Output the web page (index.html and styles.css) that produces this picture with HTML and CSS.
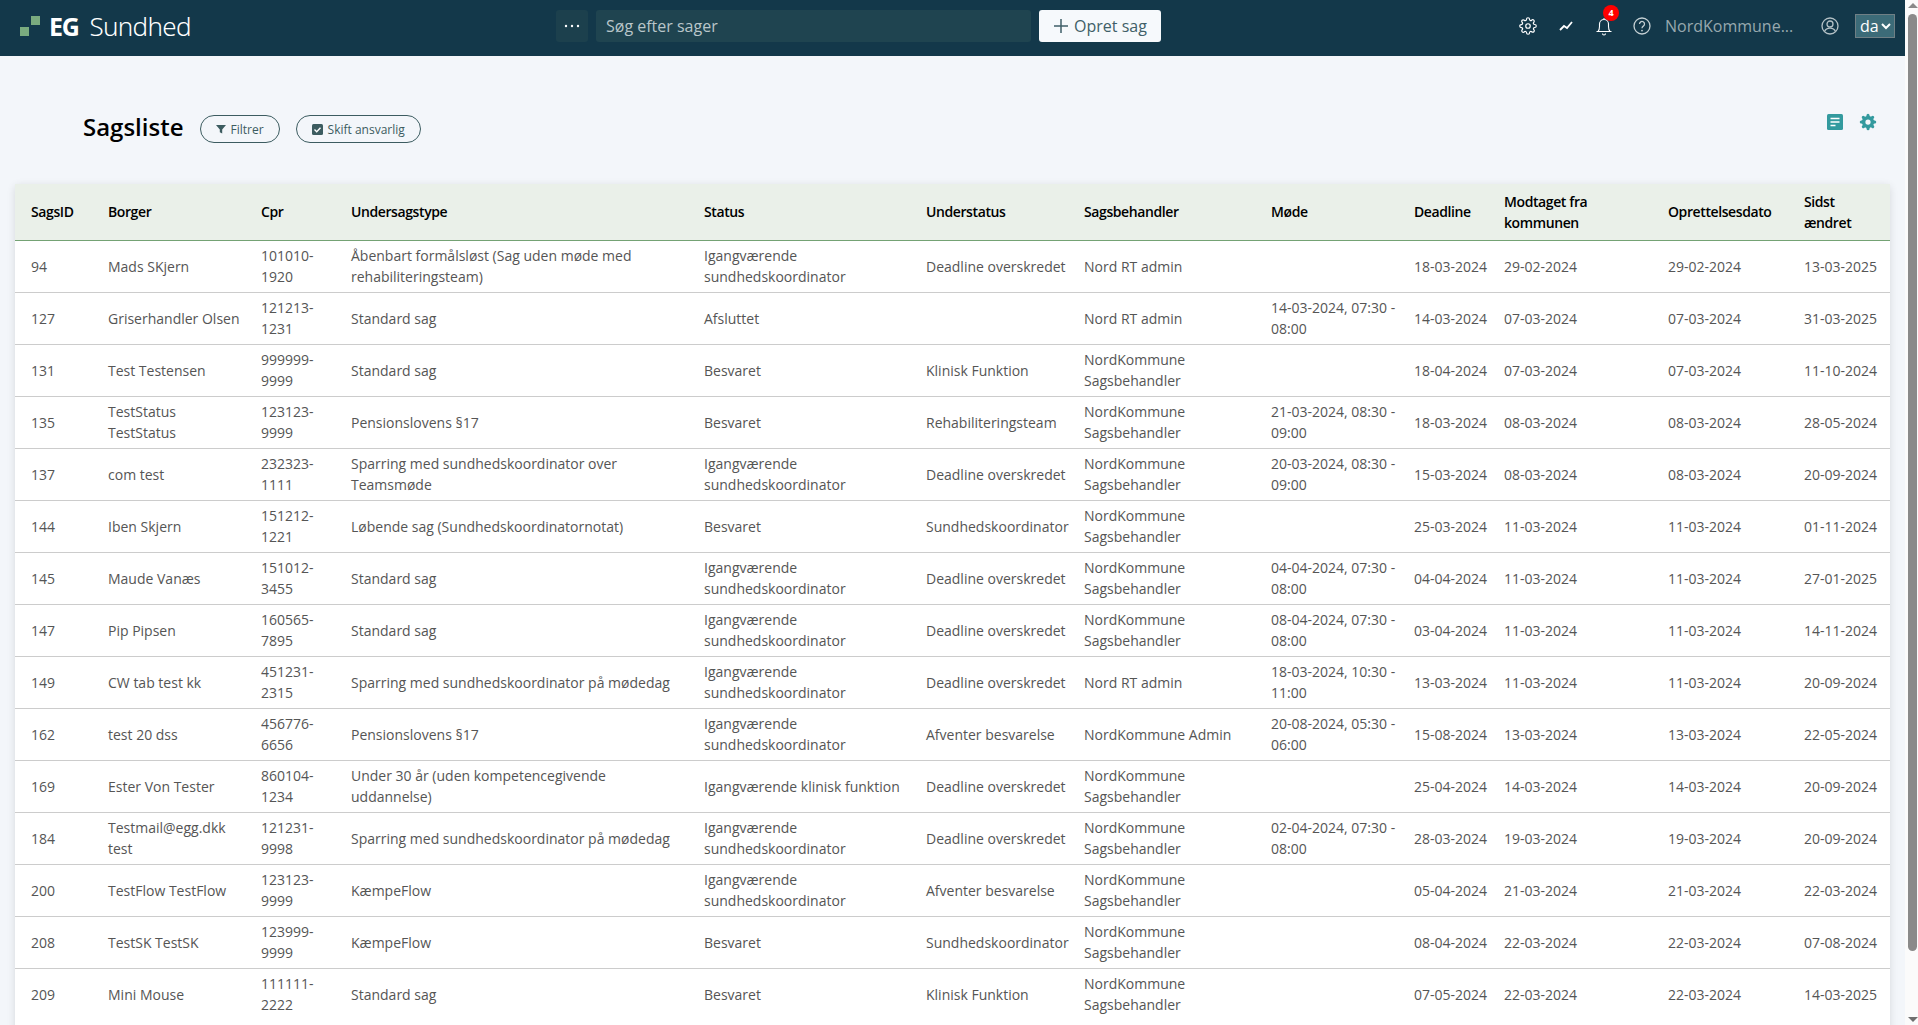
FILE: index.html
```html
<!DOCTYPE html>
<html lang="da">
<head>
    <meta charset="UTF-8">
    <meta name="viewport" content="width=device-width, initial-scale=1.0">
    <title>EG Sundhed - Sagsliste</title>
    <link rel="stylesheet" href="styles.css">
</head>
<body>

<div class="page">
    <header class="navbar">
        <a class="brand">
            <svg class="brand-mark" width="20" height="20" viewBox="0 0 20 20"><rect x="0" y="11" width="9" height="9"/><rect x="11" y="0" width="9" height="9"/></svg>
            <span class="brand-eg">EG</span>
            <span class="brand-name">Sundhed</span>
        </a>

        <div class="search-group">
            <button class="more-btn" aria-label="Flere">
                <svg width="16" height="4" viewBox="0 0 16 4"><circle cx="2" cy="2" r="1.2"/><circle cx="8" cy="2" r="1.2"/><circle cx="14" cy="2" r="1.2"/></svg>
            </button>
            <input class="search-input" type="text" placeholder="Søg efter sager">
            <button class="create-btn">
                <svg width="16" height="16" viewBox="0 0 16 16"><path d="M8 1v14M1 8h14"/></svg>
                Opret sag
            </button>
        </div>

        <div class="nav-tools">
            <svg class="nav-icon gear" width="18" height="18" viewBox="0 0 24 24"><circle cx="12" cy="12" r="3"/><path d="M19.4 15a1.65 1.65 0 0 0 .33 1.82l.06.06a2 2 0 0 1 0 2.83 2 2 0 0 1-2.83 0l-.06-.06a1.65 1.65 0 0 0-1.82-.33 1.65 1.65 0 0 0-1 1.51V21a2 2 0 0 1-2 2 2 2 0 0 1-2-2v-.09A1.65 1.65 0 0 0 9 19.4a1.65 1.65 0 0 0-1.82.33l-.06.06a2 2 0 0 1-2.83 0 2 2 0 0 1 0-2.83l.06-.06a1.65 1.65 0 0 0 .33-1.82 1.65 1.65 0 0 0-1.51-1H3a2 2 0 0 1-2-2 2 2 0 0 1 2-2h.09A1.65 1.65 0 0 0 4.6 9a1.65 1.65 0 0 0-.33-1.82l-.06-.06a2 2 0 0 1 0-2.83 2 2 0 0 1 2.83 0l.06.06a1.65 1.65 0 0 0 1.82.33H9a1.65 1.65 0 0 0 1-1.51V3a2 2 0 0 1 2-2 2 2 0 0 1 2 2v.09a1.65 1.65 0 0 0 1 1.51 1.65 1.65 0 0 0 1.82-.33l.06-.06a2 2 0 0 1 2.83 0 2 2 0 0 1 0 2.83l-.06.06a1.65 1.65 0 0 0-.33 1.82V9a1.65 1.65 0 0 0 1.51 1H21a2 2 0 0 1 2 2 2 2 0 0 1-2 2h-.09a1.65 1.65 0 0 0-1.51 1z"/></svg>
            <svg class="nav-icon graph" width="18" height="18" viewBox="0 0 18 18"><path d="M3 13l4-4 3 2 5-6"/></svg>
            <span class="bell-wrap">
                <svg class="nav-icon bell" width="18" height="20" viewBox="0 0 18 20"><path d="M3 15.500c1-1.200 1.500-2.800 1.500-5V8a4.500 4.500 0 0 1 9 0v2.500c0 2.200.5 3.800 1.500 5M1.500 15.500h15M7.500 17.500a1.500 1.500 0 0 0 3 0M9 2v1.500"/></svg>
                <span class="badge">4</span>
            </span>
            <svg class="nav-icon help" width="18" height="18" viewBox="0 0 18 18"><circle cx="9" cy="9" r="8"/><path d="M6.500 7a2.500 2.500 0 1 1 3.800 2.100c-.9.6-1.300 1-1.300 2.100"/><circle class="dot" cx="9" cy="13.600" r=".9"/></svg>
            <span class="org-name">NordKommune...</span>
            <svg class="nav-icon user" width="18" height="18" viewBox="0 0 18 18"><circle cx="9" cy="9" r="8"/><circle cx="9" cy="7" r="3"/><path d="M3.500 14.500c1-2.300 3-3.300 5.500-3.300s4.500 1 5.500 3.300"/></svg>
            <div class="lang-select">da
                <svg width="10" height="8" viewBox="0 0 10 8"><path d="M1 2l4 4 4-4"/></svg>
            </div>
        </div>
    </header>

    <main class="content">
        <div class="page-head">
            <div class="head-left">
                <h1>Sagsliste</h1>
                <button class="pill filter-pill">
                    <svg width="10" height="10" viewBox="0 0 10 10"><path d="M0 1h10L6.200 5.500V9.500L3.800 8.300V5.500z"/></svg>
                    Filtrer
                </button>
                <button class="pill">
                    <svg width="11" height="11" viewBox="0 0 11 11"><rect width="11" height="11" rx="1.500"/><path class="tick" d="M2.500 5.500l2.200 2.200 3.800-4"/></svg>
                    Skift ansvarlig
                </button>
            </div>
            <div class="head-tools">
                <svg width="16" height="16" viewBox="0 0 16 16"><rect width="16" height="16" rx="1.500"/><path class="lines" d="M3.500 4.500h9M3.500 8h9M3.500 11.500h5"/></svg>
                <svg class="tool-gear" width="18" height="18" viewBox="0 0 24 24"><path d="M19.400 15a1.650 1.650 0 0 0 .33 1.820l.06.06a2 2 0 0 1 0 2.830 2 2 0 0 1-2.830 0l-.06-.06a1.650 1.650 0 0 0-1.820-.33 1.650 1.650 0 0 0-1 1.510V21a2 2 0 0 1-2 2 2 2 0 0 1-2-2v-.09A1.650 1.650 0 0 0 9 19.400a1.650 1.650 0 0 0-1.820.33l-.06.06a2 2 0 0 1-2.830 0 2 2 0 0 1 0-2.830l.06-.06a1.650 1.650 0 0 0 .33-1.820 1.650 1.650 0 0 0-1.510-1H3a2 2 0 0 1-2-2 2 2 0 0 1 2-2h.09A1.650 1.650 0 0 0 4.600 9a1.650 1.650 0 0 0-.33-1.820l-.06-.06a2 2 0 0 1 0-2.830 2 2 0 0 1 2.830 0l.06.06a1.650 1.650 0 0 0 1.820.33H9a1.650 1.650 0 0 0 1-1.510V3a2 2 0 0 1 2-2 2 2 0 0 1 2 2v.09a1.650 1.650 0 0 0 1 1.510 1.650 1.650 0 0 0 1.820-.33l.06-.06a2 2 0 0 1 2.830 0 2 2 0 0 1 0 2.830l-.06.06a1.650 1.650 0 0 0-.33 1.820V9a1.650 1.650 0 0 0 1.510 1H21a2 2 0 0 1 2 2 2 2 0 0 1-2 2h-.09a1.650 1.650 0 0 0-1.510 1z"/><circle class="hole" cx="12" cy="12" r="3.500"/></svg>
            </div>
        </div>

        <div class="card">
            <table class="case-table">
                <thead>
                    <tr>
                        <th class="c-id">SagsID</th>
                        <th class="c-name">Borger</th>
                        <th class="c-cpr">Cpr</th>
                        <th class="c-type">Undersagstype</th>
                        <th class="c-status">Status</th>
                        <th class="c-sub">Understatus</th>
                        <th class="c-owner">Sagsbehandler</th>
                        <th class="c-meet">Møde</th>
                        <th class="c-dead">Deadline</th>
                        <th class="c-recv">Modtaget fra<br>kommunen</th>
                        <th class="c-made">Oprettelsesdato</th>
                        <th class="c-edit">Sidst<br>ændret</th>
                    </tr>
                </thead>
                <tbody>
                    <tr><td>94</td><td>Mads SKjern</td><td>101010-1920</td><td>Åbenbart formålsløst (Sag uden møde med rehabiliteringsteam)</td><td>Igangværende sundhedskoordinator</td><td>Deadline overskredet</td><td>Nord RT admin</td><td></td><td>18-03-2024</td><td>29-02-2024</td><td>29-02-2024</td><td>13-03-2025</td></tr>
                    <tr><td>127</td><td>Griserhandler Olsen</td><td>121213-1231</td><td>Standard sag</td><td>Afsluttet</td><td></td><td>Nord RT admin</td><td>14-03-2024, 07:30 - 08:00</td><td>14-03-2024</td><td>07-03-2024</td><td>07-03-2024</td><td>31-03-2025</td></tr>
                    <tr><td>131</td><td>Test Testensen</td><td>999999-9999</td><td>Standard sag</td><td>Besvaret</td><td>Klinisk Funktion</td><td>NordKommune Sagsbehandler</td><td></td><td>18-04-2024</td><td>07-03-2024</td><td>07-03-2024</td><td>11-10-2024</td></tr>
                    <tr><td>135</td><td>TestStatus TestStatus</td><td>123123-9999</td><td>Pensionslovens §17</td><td>Besvaret</td><td>Rehabiliteringsteam</td><td>NordKommune Sagsbehandler</td><td>21-03-2024, 08:30 - 09:00</td><td>18-03-2024</td><td>08-03-2024</td><td>08-03-2024</td><td>28-05-2024</td></tr>
                    <tr><td>137</td><td>com test</td><td>232323-1111</td><td>Sparring med sundhedskoordinator over Teamsmøde</td><td>Igangværende sundhedskoordinator</td><td>Deadline overskredet</td><td>NordKommune Sagsbehandler</td><td>20-03-2024, 08:30 - 09:00</td><td>15-03-2024</td><td>08-03-2024</td><td>08-03-2024</td><td>20-09-2024</td></tr>
                    <tr><td>144</td><td>Iben Skjern</td><td>151212-1221</td><td>Løbende sag (Sundhedskoordinatornotat)</td><td>Besvaret</td><td>Sundhedskoordinator</td><td>NordKommune Sagsbehandler</td><td></td><td>25-03-2024</td><td>11-03-2024</td><td>11-03-2024</td><td>01-11-2024</td></tr>
                    <tr><td>145</td><td>Maude Vanæs</td><td>151012-3455</td><td>Standard sag</td><td>Igangværende sundhedskoordinator</td><td>Deadline overskredet</td><td>NordKommune Sagsbehandler</td><td>04-04-2024, 07:30 - 08:00</td><td>04-04-2024</td><td>11-03-2024</td><td>11-03-2024</td><td>27-01-2025</td></tr>
                    <tr><td>147</td><td>Pip Pipsen</td><td>160565-7895</td><td>Standard sag</td><td>Igangværende sundhedskoordinator</td><td>Deadline overskredet</td><td>NordKommune Sagsbehandler</td><td>08-04-2024, 07:30 - 08:00</td><td>03-04-2024</td><td>11-03-2024</td><td>11-03-2024</td><td>14-11-2024</td></tr>
                    <tr><td>149</td><td>CW tab test kk</td><td>451231-2315</td><td>Sparring med sundhedskoordinator på mødedag</td><td>Igangværende sundhedskoordinator</td><td>Deadline overskredet</td><td>Nord RT admin</td><td>18-03-2024, 10:30 - 11:00</td><td>13-03-2024</td><td>11-03-2024</td><td>11-03-2024</td><td>20-09-2024</td></tr>
                    <tr><td>162</td><td>test 20 dss</td><td>456776-6656</td><td>Pensionslovens §17</td><td>Igangværende sundhedskoordinator</td><td>Afventer besvarelse</td><td>NordKommune Admin</td><td>20-08-2024, 05:30 - 06:00</td><td>15-08-2024</td><td>13-03-2024</td><td>13-03-2024</td><td>22-05-2024</td></tr>
                    <tr><td>169</td><td>Ester Von Tester</td><td>860104-1234</td><td>Under 30 år (uden kompetencegivende uddannelse)</td><td>Igangværende klinisk funktion</td><td>Deadline overskredet</td><td>NordKommune Sagsbehandler</td><td></td><td>25-04-2024</td><td>14-03-2024</td><td>14-03-2024</td><td>20-09-2024</td></tr>
                    <tr><td>184</td><td>Testmail@egg.dkk test</td><td>121231-9998</td><td>Sparring med sundhedskoordinator på mødedag</td><td>Igangværende sundhedskoordinator</td><td>Deadline overskredet</td><td>NordKommune Sagsbehandler</td><td>02-04-2024, 07:30 - 08:00</td><td>28-03-2024</td><td>19-03-2024</td><td>19-03-2024</td><td>20-09-2024</td></tr>
                    <tr><td>200</td><td>TestFlow TestFlow</td><td>123123-9999</td><td>KæmpeFlow</td><td>Igangværende sundhedskoordinator</td><td>Afventer besvarelse</td><td>NordKommune Sagsbehandler</td><td></td><td>05-04-2024</td><td>21-03-2024</td><td>21-03-2024</td><td>22-03-2024</td></tr>
                    <tr><td>208</td><td>TestSK TestSK</td><td>123999-9999</td><td>KæmpeFlow</td><td>Besvaret</td><td>Sundhedskoordinator</td><td>NordKommune Sagsbehandler</td><td></td><td>08-04-2024</td><td>22-03-2024</td><td>22-03-2024</td><td>07-08-2024</td></tr>
                    <tr><td>209</td><td>Mini Mouse</td><td>111111-2222</td><td>Standard sag</td><td>Besvaret</td><td>Klinisk Funktion</td><td>NordKommune Sagsbehandler</td><td></td><td>07-05-2024</td><td>22-03-2024</td><td>22-03-2024</td><td>14-03-2025</td></tr>
                </tbody>
            </table>
        </div>
    </main>
</div>

<div class="scrollbar">
    <span class="arrow-up"></span>
    <span class="thumb"></span>
    <span class="arrow-down"></span>
</div>

</body>
</html>
```

FILE: styles.css
```css
/* Base Styles */
:root {
    --nav-bg: #13384a;
    --nav-field: #1f4450;
    --page-bg: #f3f6fa;
    --teal: #339a9e;
    --pill-color: #3c5c60;
    --text-color: #555;
}

html, body {
    height: 100%;
}

body {
    margin: 0;
    display: flex;
    overflow: hidden;
    font-family: "Open Sans", Arial, sans-serif;
    font-size: 14px;
    line-height: 21px;
    color: var(--text-color);
    background-color: var(--page-bg);
}

.page {
    flex: 1;
    min-width: 0;
    height: 100%;
    overflow: hidden;
}

/* Top Bar */
.navbar {
    display: flex;
    align-items: center;
    height: 56px;
    padding-bottom: 4px;
    box-sizing: border-box;
    background-color: var(--nav-bg);
}

.brand {
    display: flex;
    align-items: center;
    width: 556px;
    padding-left: 20px;
    box-sizing: border-box;
    color: #fff;
    font-family: "Noto Sans", sans-serif;
    font-size: 26px;
    line-height: 32px;
}

.brand-mark {
    margin-right: 9px;
    fill: #7aab7f;
}

.brand-eg {
    font-size: 25px;
    font-weight: 700;
    margin-right: 11px;
    letter-spacing: -1.3px;
}

.brand-name {
    font-weight: 300;
    letter-spacing: -0.7px;
}

.search-group {
    display: flex;
    align-items: center;
    gap: 8px;
}

.more-btn {
    display: flex;
    align-items: center;
    justify-content: center;
    width: 32px;
    height: 32px;
    padding: 0;
    border: none;
    border-radius: 3px;
    background-color: #1c404d;
}

.more-btn svg {
    fill: #fff;
}

.search-input {
    width: 435px;
    height: 32px;
    padding: 0 10px;
    box-sizing: border-box;
    border: none;
    border-radius: 3px;
    background-color: var(--nav-field);
    font-family: inherit;
    font-size: 16px;
    color: #fff;
}

.search-input::placeholder {
    color: #b9c6ca;
    opacity: 1;
}

.create-btn {
    display: flex;
    align-items: center;
    justify-content: center;
    gap: 5px;
    width: 122px;
    height: 32px;
    padding: 0;
    border: none;
    border-radius: 3px;
    background-color: #f6f9fc;
    font-family: inherit;
    font-size: 16px;
    color: #3f5f68;
}

.create-btn svg {
    fill: none;
    stroke: #3f5f68;
    stroke-width: 1.5;
}

.nav-tools {
    display: flex;
    align-items: center;
    margin-left: 358px;
}

.nav-icon {
    flex: none;
    fill: none;
    stroke: #fff;
    stroke-width: 1.1;
}

.nav-icon.gear {
    stroke-width: 1.6;
}

.nav-icon.graph {
    margin-left: 20px;
    stroke-width: 1.8;
}

.bell-wrap {
    position: relative;
    display: flex;
    margin-left: 20px;
}

.badge {
    position: absolute;
    top: -11px;
    left: 8px;
    width: 16px;
    height: 16px;
    border-radius: 50%;
    background-color: #f00;
    color: #fff;
    font-size: 9px;
    font-weight: 700;
    line-height: 16px;
    text-align: center;
}

.nav-icon.help {
    margin-left: 20px;
    stroke: #c5d0d4;
    stroke-width: 1.3;
}

.nav-icon .dot {
    fill: #c5d0d4;
    stroke: none;
}

.org-name {
    margin-left: 14px;
    width: 156px;
    font-size: 16px;
    font-weight: 500;
    color: #97a8ae;
    white-space: nowrap;
}

.nav-icon.user {
    stroke: #b4c1c6;
    stroke-width: 1.3;
}

.lang-select {
    display: flex;
    align-items: center;
    justify-content: space-between;
    width: 40px;
    height: 24px;
    margin-left: 16px;
    padding: 0 3px 0 4px;
    box-sizing: border-box;
    border: 1px solid #6f7f85;
    background-color: #3c6b78;
    color: #fff;
    font-size: 16px;
}

.lang-select svg {
    fill: none;
    stroke: #fff;
    stroke-width: 2;
}

/* Heading */
.page-head {
    display: flex;
    align-items: flex-start;
    height: 128px;
    padding: 59px 28px 0 83px;
    box-sizing: border-box;
}

.head-left {
    display: flex;
    align-items: center;
    height: 28px;
}

.head-left h1 {
    margin: -5px 16px 0 0;
    font-size: 24px;
    font-weight: 600;
    line-height: 32px;
    color: #000;
}

.pill {
    display: flex;
    align-items: center;
    gap: 5px;
    height: 28px;
    margin-right: 16px;
    padding: 0 15px;
    box-sizing: border-box;
    border: 1px solid var(--pill-color);
    border-radius: 14px;
    background: none;
    font-family: inherit;
    font-size: 12px;
    font-weight: 500;
    color: var(--pill-color);
}

.pill svg {
    fill: var(--pill-color);
}

.pill .tick {
    fill: none;
    stroke: #fff;
    stroke-width: 1.4;
}

.head-tools {
    display: flex;
    align-items: center;
    gap: 16px;
    margin-left: auto;
    margin-top: -2px;
}

.head-tools svg {
    fill: var(--teal);
}

.head-tools .lines {
    fill: none;
    stroke: #fff;
    stroke-width: 1.5;
}

.head-tools .hole {
    fill: var(--page-bg);
}

/* Table */
.card {
    margin: 0 15px;
    padding-bottom: 40px;
    background-color: #fff;
    box-shadow: 0 2px 8px rgba(0, 0, 0, 0.12);
    border-radius: 3px;
}

.case-table {
    width: 100%;
    table-layout: fixed;
    border-collapse: collapse;
}

.case-table th {
    height: 56px;
    padding: 0 0 0 16px;
    box-sizing: border-box;
    border-bottom: 1px solid #74a274;
    background-color: #eaf0e9;
    font-weight: 600;
    letter-spacing: -0.4px;
    color: #000;
    text-align: left;
}

.case-table td {
    height: 52px;
    padding: 0 0 0 16px;
    box-sizing: border-box;
    border-bottom: 1px solid #ccc;
    vertical-align: middle;
}

.case-table tbody tr:last-child td {
    border-bottom: none;
}

.case-table td:nth-child(6),
.case-table td:nth-child(n+9) {
    white-space: nowrap;
}

.case-table td:nth-child(2) {
    padding-right: 3px;
}

.c-id { width: 77px; }
.c-name { width: 153px; }
.c-cpr { width: 90px; }
.c-type { width: 353px; }
.c-status { width: 222px; }
.c-sub { width: 158px; }
.c-owner { width: 187px; }
.c-meet { width: 143px; }
.c-dead { width: 90px; }
.c-recv { width: 164px; }
.c-made { width: 136px; }
.c-edit { width: 102px; }

/* Fake scrollbar, the page itself never scrolls */
.scrollbar {
    position: relative;
    flex: none;
    width: 13px;
    height: 100%;
    background-color: #fbfbfb;
}

.thumb {
    position: absolute;
    top: 14px;
    left: 3px;
    width: 9px;
    height: 937px;
    border-radius: 5px;
    background-color: #8a8a8a;
}

.arrow-up,
.arrow-down {
    position: absolute;
    left: 3px;
    width: 0;
    height: 0;
    border-left: 5px solid transparent;
    border-right: 5px solid transparent;
}

.arrow-up {
    top: 3px;
    border-bottom: 5px solid #8a8a8a;
}

.arrow-down {
    bottom: 3px;
    border-top: 5px solid #6f6f6f;
}
```
